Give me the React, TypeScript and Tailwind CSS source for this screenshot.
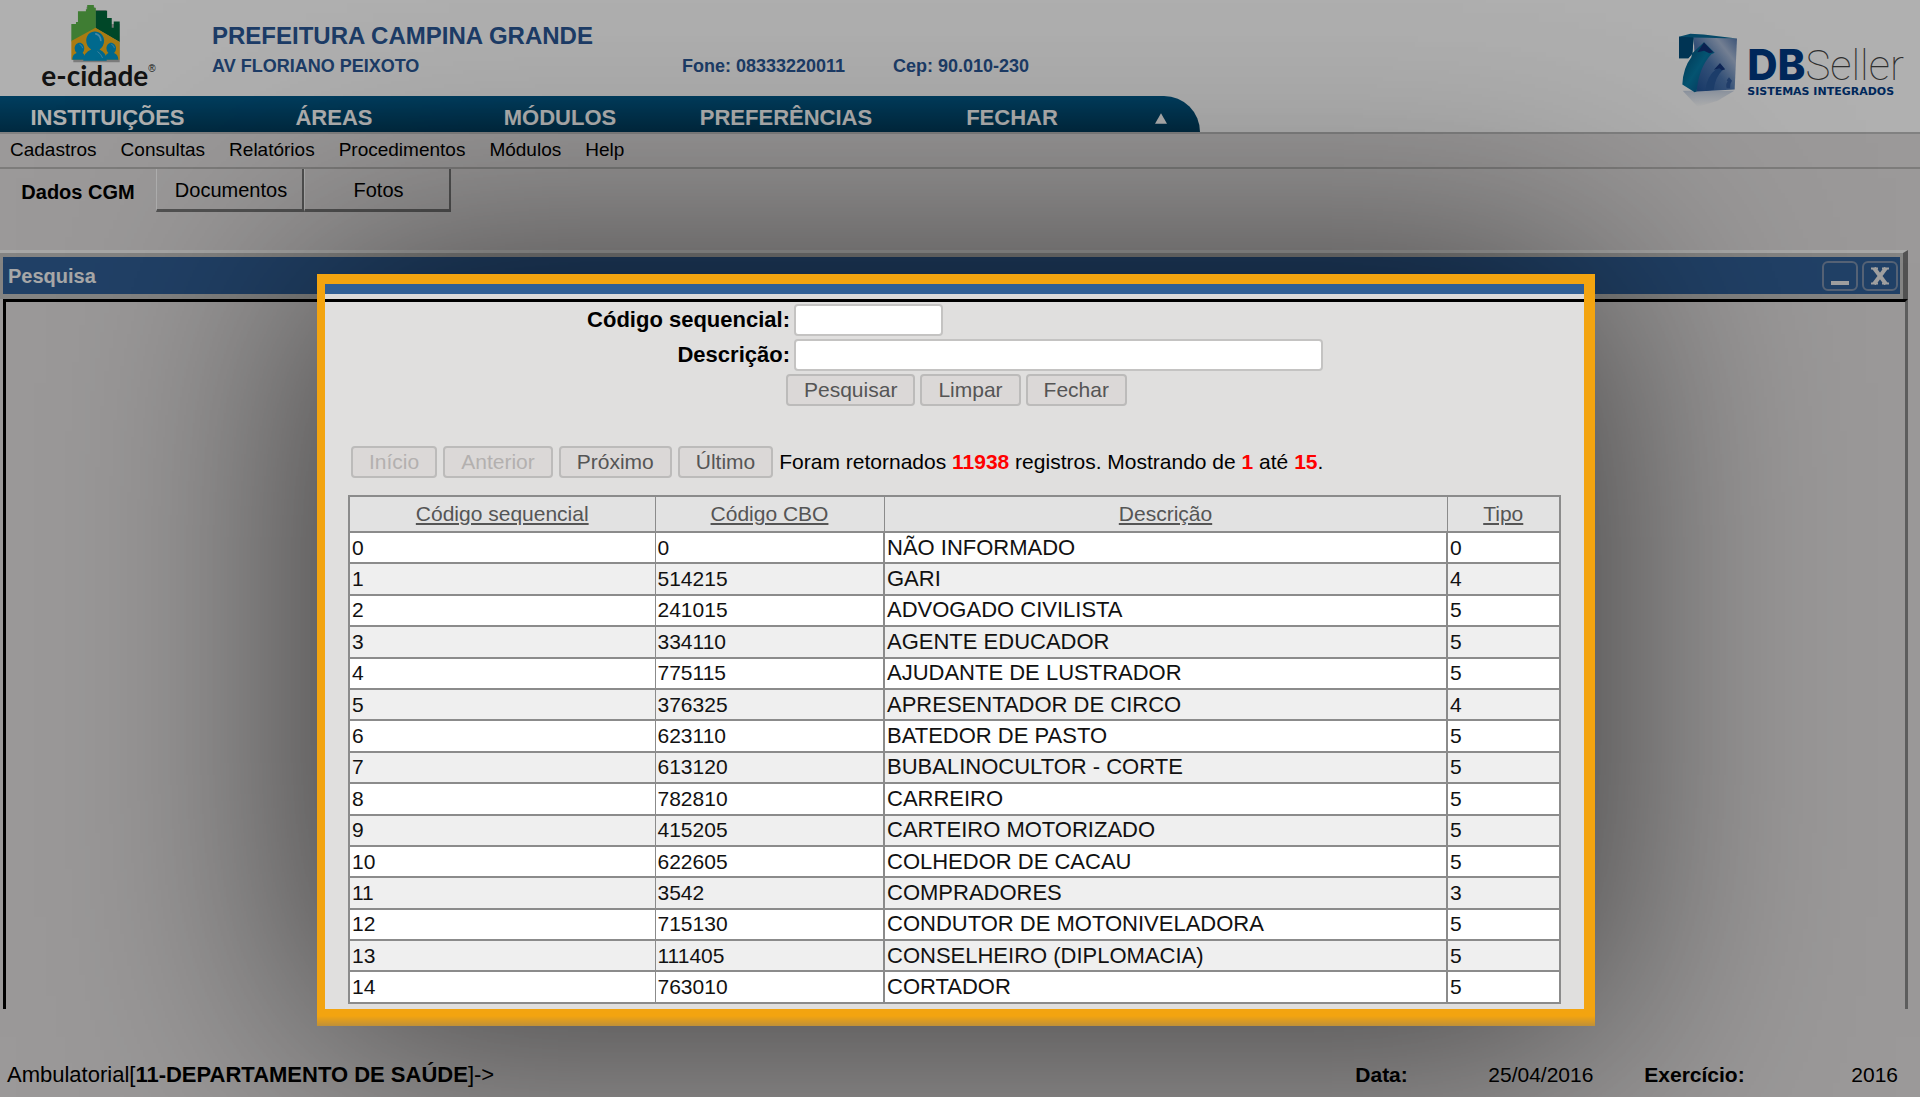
import React from "react";

const rows: [string, string, string, string][] = [
  ["0", "0", "NÃO INFORMADO", "0"],
  ["1", "514215", "GARI", "4"],
  ["2", "241015", "ADVOGADO CIVILISTA", "5"],
  ["3", "334110", "AGENTE EDUCADOR", "5"],
  ["4", "775115", "AJUDANTE DE LUSTRADOR", "5"],
  ["5", "376325", "APRESENTADOR DE CIRCO", "4"],
  ["6", "623110", "BATEDOR DE PASTO", "5"],
  ["7", "613120", "BUBALINOCULTOR - CORTE", "5"],
  ["8", "782810", "CARREIRO", "5"],
  ["9", "415205", "CARTEIRO MOTORIZADO", "5"],
  ["10", "622605", "COLHEDOR DE CACAU", "5"],
  ["11", "3542", "COMPRADORES", "3"],
  ["12", "715130", "CONDUTOR DE MOTONIVELADORA", "5"],
  ["13", "111405", "CONSELHEIRO (DIPLOMACIA)", "5"],
  ["14", "763010", "CORTADOR", "5"],
];

const menu = ["Cadastros", "Consultas", "Relatórios", "Procedimentos", "Módulos", "Help"];
const columns = ["Código sequencial", "Código CBO", "Descrição", "Tipo"];

function CidadeLogo() {
  return (
    <div className="flex w-[115px] flex-col items-center">
      <svg viewBox="150 12 160 178" className="mt-1 mr-1 h-[59px] w-[53px]" aria-hidden="true">
        <path d="M160 188V78h18V40h22V20h24v10h36v24h14v18h26v116z" fill="#000" opacity=".3" />
        <path d="M154 125V72h14v-6h6V34h24v-6h4V15h20v8h6v70z" fill="#5cb54a" />
        <path d="M228 85V32h34v22h14v30h6V65h18v62z" fill="#00683a" />
        <path d="M154 180v-56l73-40 73 43v53z" fill="#f5b31a" />
        <path d="M190 183q2-26 24-34-15-10-15-27c0-15 11-27 26-27s28 12 28 27q0 17-14 27 20 8 22 34z" fill="#0098cc" />
        <path d="M157 180q0-16 13-20-6-6-6-14c0-10 7-17 15-17s14 7 14 17q0 8-5 14 8 5 9 20z" fill="#0098cc" />
        <path d="M255 180q1-16 11-20-6-6-6-14c0-10 7-17 14-17s15 7 15 17q0 8-6 14 12 4 13 20z" fill="#0098cc" />
        <path d="M228 102q14 4 15 20" fill="none" stroke="#6cc6ea" strokeWidth="5" strokeLinecap="round" />
        <path d="M234 156q10 6 14 18M180 134q7 2 8 10M276 134q7 2 8 10" fill="none" stroke="#5cbce4" strokeWidth="3" strokeLinecap="round" />
      </svg>
      <div className="flex items-start text-[#1c1c1c]">
        <span className="font-['Lato',sans-serif] text-[28px] leading-6 font-bold">e-cidade</span>
        <span className="text-[10px] leading-3">®</span>
      </div>
    </div>
  );
}

function SellerLogo() {
  return (
    <div className="mr-4 flex gap-2 pt-8 whitespace-nowrap">
      <svg viewBox="105 96 186 230" className="h-[77px] w-[62px]" aria-hidden="true">
        <defs>
          <linearGradient id="front" x1="0" y1="1" x2="1" y2="0">
            <stop offset="0" stopColor="#1d4f96" />
            <stop offset=".45" stopColor="#4f78b0" />
            <stop offset=".75" stopColor="#a9bad6" />
            <stop offset="1" stopColor="#5578ad" />
          </linearGradient>
          <linearGradient id="side" x1="0" y1="0" x2="1" y2="1">
            <stop offset="0" stopColor="#00456f" />
            <stop offset=".5" stopColor="#087ba6" />
            <stop offset="1" stopColor="#08407c" />
          </linearGradient>
          <linearGradient id="reflection" x1="0" y1="0" x2="0" y2="1">
            <stop offset="0" stopColor="#6b89b8" stopOpacity=".35" />
            <stop offset="1" stopColor="#6b89b8" stopOpacity="0" />
          </linearGradient>
        </defs>
        <path d="M122 272h155l-50 30-60 18z" fill="url(#reflection)" />
        <path d="M155 110l130 5-7 153-115 6z" fill="url(#front)" />
        <path d="M111 172h42l-32 62v20l38 22 6-4q4-70 42-112l8-2-32-32-26 22-14-10z" fill="#b8b9bb" opacity=".001" />
        <path d="M150 160l36-34 32 32-10 4q-38 40-44 112l-6 2-37-23q2-50 27-82z" fill="url(#side)" />
        <path d="M166 156l20-29 28 29-12 3-16-7z" fill="#123278" />
        <path d="M190 272q4-44 34-66l-8 3 18-20 15 18-8 3q-22 22-26 59z" fill="#2a5a9c" />
        <path d="M216 209l18-20 15 18-9 3-8-6z" fill="#16367c" />
        <path d="M254 240l7-9 9 11q-6 8-6 22h-10q-4-12 3-20z" fill="#315a9a" />
        <path d="M111 110l34-9 40 2 100 12-130-3-4 48-12 14h-28z" fill="#0a6c98" />
        <path d="M111 110l44 2-4 48-12 14h-28z" fill="#004d7c" />
      </svg>
      <div className="flex flex-col pt-[13px]">
        <div className="flex items-baseline">
          <span className="font-['Inter',sans-serif] text-[42px] leading-10 font-extrabold text-[#003a84]">DB</span>
          <span className="font-['Roboto',sans-serif] text-[42px] leading-10 font-thin text-[#444]">Seller</span>
        </div>
        <span className="font-['DejaVu_Sans',sans-serif] text-[11px] leading-3 font-bold text-[#003a84]">
          SISTEMAS INTEGRADOS
        </span>
      </div>
    </div>
  );
}

function NavButton({ children, first }: { children: string; first?: boolean }) {
  return (
    <button className={first ? "w-[221px] pr-[6px] text-center" : "w-[226px] text-center"}>{children}</button>
  );
}

function FormButton({ children, disabled }: { children: string; disabled?: boolean }) {
  return (
    <button
      disabled={disabled}
      className="h-8 rounded-sm border-2 border-[#bcbbba] bg-[#dbd8d7] px-4 text-[21px] leading-6 text-[#555] disabled:text-[#b3b0af]"
    >
      {children}
    </button>
  );
}

function SearchDialog() {
  return (
    <section
      aria-label="Pesquisa"
      className="absolute top-[274px] right-[325px] left-[317px] bg-[linear-gradient(to_top,#bf9038,#f3a410_10px)] px-2 pt-[10px] pb-[17px] shadow-[0_0_240px_10px_rgba(0,0,0,0.62)]"
    >
      <div className="mr-[3px] bg-[#e0dfde] pb-[5px]">
        <div className="h-[10px] bg-[#305f96]" />
        <div className="h-2 border-b-3 border-black bg-[#dcdbda]" />
        <form className="flex flex-col pt-[2px]" onSubmit={(e) => e.preventDefault()}>
          <div className="flex items-center gap-1">
            <label htmlFor="codigo" className="w-[465px] text-right text-[22px] leading-8 font-bold">
              Código sequencial:
            </label>
            <input id="codigo" className="h-8 w-[149px] rounded-sm border-2 border-[#c4c3c2] bg-white px-1" />
          </div>
          <div className="mt-[3px] flex items-center gap-1">
            <label htmlFor="descricao" className="w-[465px] text-right text-[22px] leading-8 font-bold">
              Descrição:
            </label>
            <input id="descricao" className="h-8 w-[529px] rounded-sm border-2 border-[#c4c3c2] bg-white px-1" />
          </div>
          <div className="mt-[3px] ml-[461px] flex gap-[5px]">
            <FormButton>Pesquisar</FormButton>
            <FormButton>Limpar</FormButton>
            <FormButton>Fechar</FormButton>
          </div>
        </form>
        <div className="mt-10 ml-[26px] flex items-center gap-[6px]">
          <FormButton disabled>Início</FormButton>
          <FormButton disabled>Anterior</FormButton>
          <FormButton>Próximo</FormButton>
          <FormButton>Último</FormButton>
          <p className="text-[21px] leading-8">
            Foram retornados <b className="text-[#f00]">11938</b> registros. Mostrando de{" "}
            <b className="text-[#f00]">1</b> até <b className="text-[#f00]">15</b>.
          </p>
        </div>
        <div className="mt-[17px] mr-[23px] ml-[23px]">
          <table className="h-[509px] w-full table-fixed border-collapse border-2 border-[#8b8b8b] bg-white">
            <colgroup>
              <col className="w-[306px]" />
              <col className="w-[229px]" />
              <col />
              <col className="w-[113px]" />
            </colgroup>
            <thead>
              <tr className="h-[36px] bg-[#e2e2e2]">
                {columns.map((c) => (
                  <th key={c} className="border-x border-y-2 border-[#8b8b8b] p-0 text-[21px] leading-7 font-normal text-[#555]">
                    <a href="#" className="underline">
                      {c}
                    </a>
                  </th>
                ))}
              </tr>
            </thead>
            <tbody>
              {rows.map((r) => (
                <tr key={r[0]} className="even:bg-[#efefef]">
                  {r.map((cell, i) => (
                    <td
                      key={i}
                      className={
                        i === 2
                          ? "border-x-2 border-y-2 border-[#8b8b8b] py-0 pr-0 pl-[2px] text-[22px] leading-7 text-[#111]"
                          : "border-x border-y-2 border-[#8b8b8b] py-0 pr-0 pl-[2px] text-[21px] leading-7 text-[#111]"
                      }
                    >
                      {cell}
                    </td>
                  ))}
                </tr>
              ))}
            </tbody>
          </table>
        </div>
      </div>
    </section>
  );
}

export default function App() {
  return (
    <div className="relative flex min-h-screen flex-col overflow-hidden bg-[#e1dede] font-['Liberation_Sans',Arial,sans-serif] text-black">
      <header className="flex items-start justify-between border-b-2 border-[#bbb] bg-white">
        <div className="w-[1200px]">
          <div className="flex h-24 text-[#2a5796]">
            <div className="w-[212px] pl-[41px]">
              <CidadeLogo />
            </div>
            <div className="pt-[22px] font-bold">
              <h1 className="text-[24px] leading-7">PREFEITURA CAMPINA GRANDE</h1>
              <div className="flex pt-1 text-[18px] leading-6">
                <span className="w-[470px]">AV FLORIANO PEIXOTO</span>
                <span className="w-[211px]">Fone: 08333220011</span>
                <span>Cep: 90.010-230</span>
              </div>
            </div>
          </div>
          <nav className="flex h-9 items-center rounded-tr-[40px] bg-linear-to-b from-[#005a8a] to-[#003c5c] pt-[7px] text-[22px] leading-7 font-bold text-white">
            <NavButton first>INSTITUIÇÕES</NavButton>
            <NavButton>ÁREAS</NavButton>
            <NavButton>MÓDULOS</NavButton>
            <NavButton>PREFERÊNCIAS</NavButton>
            <NavButton>FECHAR</NavButton>
            <button aria-label="Recolher" className="ml-[30px] flex pt-[2px]">
              <svg viewBox="0 0 14 12" className="h-[11px] w-3" aria-hidden="true">
                <path d="M7 0l7 12H0z" fill="#fff" />
              </svg>
            </button>
          </nav>
        </div>
        <SellerLogo />
      </header>

      <nav className="flex h-[35px] items-center gap-6 border-b-2 border-[#b5b4b3] pb-px pl-[10px] text-[19px] leading-8">
        {menu.map((m) => (
          <button key={m}>{m}</button>
        ))}
      </nav>

      <div className="flex items-start text-[20px]">
        <button className="h-11 w-[156px] pt-px font-bold">Dados CGM</button>
        <button className="h-[43px] w-[148px] border-r-2 border-b-3 border-l border-[#777] border-l-white pt-px pl-[3px]">
          Documentos
        </button>
        <button className="h-[43px] w-[147px] border-r-2 border-b-3 border-l border-[#777] border-l-white pt-px pl-[3px]">
          Fotos
        </button>
      </div>

      <main className="mt-[37px] mr-3 flex flex-1 flex-col">
        <div className="border-t-3 border-r-5 border-[#f4f3f2] border-r-[#777]">
          <div className="border-t-4 border-r-3 border-b-5 border-l-3 border-[#c0bfbe]">
            <div className="flex h-[37px] items-center justify-between bg-[#305f96] pr-[2px] pl-[5px]">
              <h2 className="text-[20px] leading-7 font-bold text-[#f4f4f4]">Pesquisa</h2>
              <div className="flex gap-1">
                <button aria-label="Minimizar" className="flex h-[30px] w-9 items-end justify-center rounded-md border-2 border-[#7d90ab] pb-1">
                  <span className="h-1 w-[18px] bg-[#e8e8e8]" />
                </button>
                <button aria-label="Fechar janela" className="flex h-[30px] w-9 items-center justify-center rounded-md border-2 border-[#7d90ab]">
                  <svg viewBox="0 0 18 18" className="h-[18px] w-[18px]" aria-hidden="true">
                    <path d="M3 1l12 16M15 1L3 17" stroke="#e8e8e8" strokeWidth="4" />
                    <path d="M0 1.500h7M11 1.500h7M0 16.500h7M11 16.500h7" stroke="#e8e8e8" strokeWidth="2" />
                  </svg>
                </button>
              </div>
            </div>
          </div>
        </div>
        <div className="ml-[3px] flex-1 border-t-3 border-r-3 border-l-3 border-black border-r-[#888]" />
      </main>

      <footer className="flex h-[88px] items-center justify-between pt-11 pr-[22px] pl-[7px] text-[21px] leading-7">
        <p className="text-[22px]">
          Ambulatorial[<b>11-DEPARTAMENTO DE SAÚDE</b>]-&gt;
        </p>
        <dl className="flex">
          <dt className="w-[133px] font-bold">Data:</dt>
          <dd className="w-[156px]">25/04/2016</dd>
          <dt className="w-[207px] font-bold">Exercício:</dt>
          <dd>2016</dd>
        </dl>
      </footer>

      <div className="absolute inset-0 bg-black/31" />
      <SearchDialog />
    </div>
  );
}
